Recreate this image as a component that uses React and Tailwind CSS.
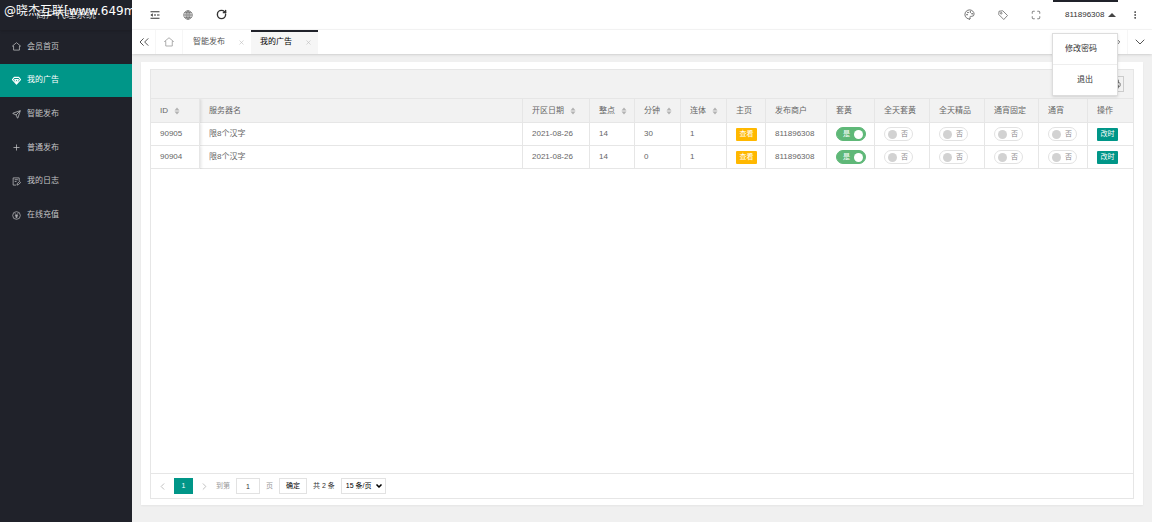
import {
  ChevronDown,
  ChevronLeft,
  ChevronRight,
  ChevronsLeft,
  EllipsisVertical,
  Maximize,
  Palette,
  Plus,
  Printer,
  RotateCw,
  Send,
  X,
} from "lucide-react";
import clsx from "clsx";

function HomeIcon({ className }) {
  return (
    <svg viewBox="0 0 20 20" className={className} fill="none" stroke="currentColor" strokeWidth="1.6">
      <path d="M1 9 10 1.500 19 9h-2.500v9h-13V9z" strokeLinejoin="round" />
    </svg>
  );
}

function GemIcon({ className }) {
  return (
    <svg viewBox="0 0 20 20" className={className} fill="none" stroke="currentColor" strokeWidth="2.400">
      <path d="M5 3h10l4 5-9 10L1 8zM5 8h10M6 8l4 7 4-7" strokeLinejoin="round" />
    </svg>
  );
}

function TagIcon({ className }) {
  return (
    <svg viewBox="0 0 20 20" className={className} fill="none" stroke="currentColor" strokeWidth="1.6">
      <path d="M2 2.500 9.500 1.500 19 11l-7.500 8L1.500 9z" strokeLinejoin="round" />
      <circle cx="6.500" cy="6.500" r="1.600" />
    </svg>
  );
}

function IndentIcon({ className }) {
  return (
    <svg viewBox="0 0 20 20" className={className} fill="none" stroke="currentColor" strokeWidth="2">
      <path d="M1 3.500h18M8 10h4M14 10h5M1 16.500h18" />
      <path d="M5.500 6.500v7L1 10z" fill="currentColor" stroke="none" />
    </svg>
  );
}

function GlobeIcon({ className }) {
  return (
    <svg viewBox="0 0 20 20" className={className} fill="none" stroke="currentColor" strokeWidth="1.5">
      <circle cx="10" cy="10" r="8.500" />
      <ellipse cx="10" cy="10" rx="4" ry="8.500" />
      <path d="M10 1.500v17M1.500 10h17M3 5.500h14M3 14.500h14" />
    </svg>
  );
}

function NoteIcon({ className }) {
  return (
    <svg viewBox="0 0 20 20" className={className} fill="none" stroke="currentColor" strokeWidth="1.6">
      <path d="M16 9V2H2.500v16H9M6 6h7M6 10h4" />
      <path d="m11 18 1-4 5-4 2 2.500-5 4.500z" />
    </svg>
  );
}

function YenIcon({ className }) {
  return (
    <svg viewBox="0 0 20 20" className={className} fill="none" stroke="currentColor" strokeWidth="1.5">
      <circle cx="10" cy="10" r="8.500" />
      <path d="m6.500 5 3.500 4.500L13.500 5M10 9.500V16M6.500 10h7M6.500 13h7" />
    </svg>
  );
}

const menu = [
  { label: "会员首页", Icon: HomeIcon },
  { label: "我的广告", Icon: GemIcon, active: true },
  { label: "智能发布", Icon: Send },
  { label: "普通发布", Icon: Plus },
  { label: "我的日志", Icon: NoteIcon },
  { label: "在线充值", Icon: YenIcon },
];

const columns = [
  { label: "ID", width: "w-[49px]", sort: true },
  { label: "服务器名", width: "" },
  { label: "开区日期", width: "w-[67px]", sort: true },
  { label: "整点", width: "w-[45px]", sort: true },
  { label: "分钟", width: "w-[46px]", sort: true },
  { label: "连体", width: "w-[46px]", sort: true },
  { label: "主页", width: "w-[39px]" },
  { label: "发布商户", width: "w-[61px]" },
  { label: "套黄", width: "w-[48px]" },
  { label: "全天套黄", width: "w-[55px]" },
  { label: "全天精品", width: "w-[55px]" },
  { label: "通宵固定", width: "w-[54px]" },
  { label: "通宵", width: "w-[49px]" },
  { label: "操作", width: "w-[45px]" },
];

const rows = [
  { id: "90905", name: "限8个汉字", date: "2021-08-26", hour: "14", minute: "30", joined: "1", owner: "811896308" },
  { id: "90904", name: "限8个汉字", date: "2021-08-26", hour: "14", minute: "0", joined: "1", owner: "811896308" },
];

function SortIcon() {
  return (
    <svg viewBox="0 0 6 8" className="h-2 w-1.5 fill-[#b2b2b2]">
      <path d="M3 .5 5.500 3.500h-5zM3 7.500.5 4.500h5z" />
    </svg>
  );
}

function Switch({ label, on }) {
  return (
    <label
      className={clsx(
        "flex h-[14px] items-center rounded-full border text-[7px]",
        on
          ? "w-[30px] flex-row-reverse justify-between border-[#5fb878] bg-[#5fb878] pl-[6px] pr-[2px] text-white"
          : "w-[29px] gap-1 border-[#e2e2e2] bg-white px-[3px] text-[#888]"
      )}
    >
      <input
        type="checkbox"
        aria-label={label}
        defaultChecked={on}
        className="size-[9px] shrink-0 appearance-none rounded-full bg-[#d2d2d2] checked:bg-white"
      />
      {on ? "是" : "否"}
    </label>
  );
}

function Sidebar() {
  return (
    <aside className="relative w-[132px] shrink-0 overflow-hidden bg-[#20222a] text-[#c3c4c6]">
      <div className="flex h-[30px] items-center justify-center text-[10px] shadow-sm">商户代理系统</div>
      <div className="absolute left-1 top-0 whitespace-nowrap font-['DejaVu_Sans','Noto_Sans_CJK_SC',sans-serif] text-[12px] leading-[22px] text-white">
        @晓杰互联[www.649m.com]
      </div>
      <nav className="grid h-[202px] grid-rows-6">
        {menu.map(({ label, Icon, active }) => (
          <a
            key={label}
            href="#"
            className={clsx("flex items-center gap-[6px] pl-3", active && "bg-[#009688] text-white")}
          >
            <Icon className="size-[9px]" />
            {label}
          </a>
        ))}
      </nav>
    </aside>
  );
}

function Header() {
  return (
    <header className="flex h-[30px] items-center border-b border-[#f6f6f6] bg-white text-[#333]">
      <div className="flex gap-[23px] pl-[18px]">
        <button aria-label="侧边伸缩"><IndentIcon className="size-[10px]" /></button>
        <button aria-label="前台" className="text-[#666]"><GlobeIcon className="size-[10px]" /></button>
        <button aria-label="刷新"><RotateCw className="size-[11px]" strokeWidth={3} /></button>
      </div>
      <div className="ml-auto flex h-full items-center gap-[23px] text-[#666]">
        <button aria-label="主题"><Palette className="size-[11px]" /></button>
        <button aria-label="便签"><TagIcon className="size-[10px]" /></button>
        <button aria-label="全屏"><Maximize className="size-[10px]" /></button>
      </div>
      <div className="relative ml-3 h-full w-[65px] border-t-2 border-[#20222a]">
        <button className="flex h-full w-full items-center gap-1 pb-px pl-3">
          811896308
          <svg viewBox="0 0 8 4" className="h-1 w-2 fill-[#444]"><path d="M4 0 8 4H0z" /></svg>
        </button>
        <div className="absolute right-0 top-[31px] z-10 grid h-[63px] w-[66px] grid-rows-2 border border-[#ddd] bg-white shadow">
          <a href="#" className="flex items-center justify-center border-b border-[#eee] pr-2">修改密码</a>
          <a href="#" className="flex items-center justify-center">退出</a>
        </div>
      </div>
      <button aria-label="更多" className="mx-3"><EllipsisVertical className="size-[10px]" /></button>
    </header>
  );
}

function Tabs() {
  return (
    <div className="flex h-6 items-stretch bg-white text-[#555] shadow-sm">
      <button aria-label="向左" className="flex w-6 items-center justify-center border-r border-[#f6f6f6]">
        <ChevronsLeft className="size-4" strokeWidth={1.5} />
      </button>
      <a href="#" aria-label="首页" className="flex w-[27px] items-center justify-center border-r border-[#f6f6f6] text-[#999]">
        <HomeIcon className="size-[10px]" />
      </a>
      <div className="flex w-[68px] items-center justify-between pl-[10px] pr-[6px]">
        <a href="#">智能发布</a>
        <button aria-label="关闭智能发布"><X className="size-[7px] text-[#bbb]" /></button>
      </div>
      <div className="flex w-[67px] items-center justify-between border-t-2 border-[#20222a] bg-[#f6f6f6] pb-[2px] pl-[9px] pr-[6px] text-black">
        <a href="#">我的广告</a>
        <button aria-label="关闭我的广告"><X className="size-[7px] text-[#bbb]" /></button>
      </div>
      <button aria-label="向右" className="ml-auto flex w-6 items-center justify-center border-r border-[#f6f6f6] pl-1">
        <ChevronRight className="size-[14px]" strokeWidth={1.5} />
      </button>
      <button aria-label="标签操作" className="flex w-6 items-center justify-center">
        <ChevronDown className="size-4" strokeWidth={1.5} />
      </button>
    </div>
  );
}

function AdTable() {
  return (
    <table className="w-full table-fixed border-separate border-spacing-0 text-left">
      <thead className="bg-[#f2f2f2]">
        <tr className="h-6">
          {columns.map((col, i) => (
            <th
              key={col.label}
              className={clsx(
                "whitespace-nowrap border-b border-r border-[#e6e6e6] p-0 pl-[9px] font-normal last:border-r-0",
                col.width,
                i === 0 && "shadow-[1px_0_3px_rgba(0,0,0,0.12)] [clip-path:inset(0_-4px_0_0)]"
              )}
            >
              <span className="flex items-center gap-[6px]">
                {col.label}
                {col.sort && <SortIcon />}
              </span>
            </th>
          ))}
        </tr>
      </thead>
      <tbody className="[&_td]:border-b [&_td]:border-r [&_td]:border-[#e6e6e6] [&_td]:p-0 [&_td]:pl-[9px] [&_td:last-child]:border-r-0">
        {rows.map((row) => (
          <tr key={row.id} className="h-[23px]">
            <td className="shadow-[1px_0_3px_rgba(0,0,0,0.12)] [clip-path:inset(0_-4px_0_0)]">{row.id}</td>
            <td>{row.name}</td>
            <td>{row.date}</td>
            <td>{row.hour}</td>
            <td>{row.minute}</td>
            <td>{row.joined}</td>
            <td>
              <button className="flex h-[13px] w-[21px] items-center justify-center rounded-[1px] bg-[#ffb800] text-[7px] text-white">
                查看
              </button>
            </td>
            <td>{row.owner}</td>
            <td><Switch label="套黄" on /></td>
            <td><Switch label="全天套黄" /></td>
            <td><Switch label="全天精品" /></td>
            <td><Switch label="通宵固定" /></td>
            <td><Switch label="通宵" /></td>
            <td>
              <button className="flex h-[13px] w-[21px] items-center justify-center rounded-[1px] bg-[#009688] text-[7px] text-white">
                改时
              </button>
            </td>
          </tr>
        ))}
      </tbody>
    </table>
  );
}

function Pager() {
  return (
    <div className="flex h-[25px] items-center gap-[6px] border-t border-[#e6e6e6] pl-[6px] text-[7px] text-[#333]">
      <button aria-label="上一页" className="text-[#bbb]"><ChevronLeft className="size-[11px]" /></button>
      <button className="h-4 w-[19px] bg-[#009688] text-white">1</button>
      <button aria-label="下一页" className="text-[#bbb]"><ChevronRight className="size-[11px]" /></button>
      <label htmlFor="page" className="text-[#999]">到第</label>
      <input id="page" defaultValue="1" className="h-4 w-6 border border-[#e2e2e2] text-center" />
      <span className="text-[#999]">页</span>
      <button className="h-4 w-7 border border-[#e2e2e2] text-black">确定</button>
      <span>共 2 条</span>
      <div className="flex h-4 w-[45px] items-center border border-[#e2e2e2] pl-1 text-black">
        <select aria-label="每页条数" className="w-[29px] appearance-none bg-white">
          <option>15 条/页</option>
          <option>30 条/页</option>
        </select>
        <ChevronDown className="size-2 shrink-0" strokeWidth={5} />
      </div>
    </div>
  );
}

export default function App() {
  return (
    <div className="flex min-h-screen bg-[#f0f0f0] font-['Liberation_Sans','Noto_Sans_CJK_SC',sans-serif] text-[8px] leading-3 text-[#666]">
      <Sidebar />
      <div className="flex min-w-0 flex-1 flex-col">
        <Header />
        <Tabs />
        <main className="mx-[9px] mb-[17px] mt-2 flex flex-1 bg-white px-[9px] pb-[6px] pt-[7px] shadow-xs">
          <section className="flex min-w-0 flex-1 flex-col border border-[#e6e6e6]">
            <div className="flex h-[29px] items-center justify-end border-b border-[#e6e6e6] bg-[#f2f2f2] pr-[9px]">
              <button aria-label="打印" className="flex size-4 items-center justify-center border border-[#ccc]">
                <Printer className="size-[10px]" />
              </button>
            </div>
            <div className="flex-1">
              <AdTable />
            </div>
            <Pager />
          </section>
        </main>
      </div>
    </div>
  );
}
